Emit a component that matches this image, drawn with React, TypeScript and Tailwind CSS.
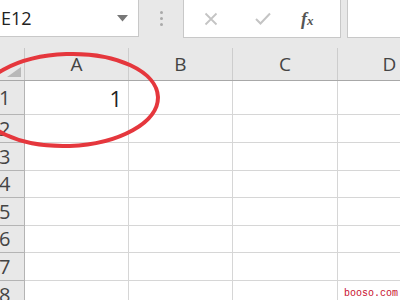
const COLS = ['A', 'B', 'C', 'D'];
const ROWS = [
  { n: '1', h: 'h-[34px]', value: '1' },
  { n: '2', h: 'h-[28px]' },
  { n: '3', h: 'h-[28px]' },
  { n: '4', h: 'h-[27px]' },
  { n: '5', h: 'h-[28px]' },
  { n: '6', h: 'h-[27px]' },
  { n: '7', h: 'h-[28px]' },
  { n: '8', h: 'h-[28px]' },
];

const GRID = 'grid grid-cols-[25px_104px_104px_105px_104px]';

export default function App() {
  return (
    <div className="relative w-[400px] h-[300px] overflow-hidden bg-white font-['Open_Sans','Liberation_Sans',sans-serif] text-[#333]">
      {/* formula toolbar */}
      <div className="flex h-[48px] bg-[#e8e8e8]">
        <div className="flex items-center justify-between w-[139px] h-[37px] bg-white border border-l-0 border-t-0 border-[#c8c8c8] pl-[1px] pr-[10px]">
          <span className="text-[18px] leading-none text-[#222]">E12</span>
          <svg width="11" height="7" viewBox="0 0 11 7">
            <path d="M0 0 L11 0 L5.5 6.5 Z" fill="#777" />
          </svg>
        </div>
        <div className="flex flex-col items-center justify-center gap-[3px] w-[44px] h-[37px]">
          <span className="w-[3px] h-[3px] rounded-full bg-[#aaa]" />
          <span className="w-[3px] h-[3px] rounded-full bg-[#aaa]" />
          <span className="w-[3px] h-[3px] rounded-full bg-[#aaa]" />
        </div>
        <div className="flex items-center w-[158px] h-[38px] bg-white border border-t-0 border-[#c8c8c8]">
          <svg className="ml-[20px]" width="14" height="14" viewBox="0 0 14 14">
            <path d="M1.5 1.5 L12.5 12.5 M12.5 1.5 L1.5 12.5" stroke="#c4c4c4" strokeWidth="1.8" />
          </svg>
          <svg className="ml-[37px]" width="16" height="13" viewBox="0 0 16 13">
            <path d="M1 7 L5.5 11.5 L15 1.5" stroke="#c4c4c4" strokeWidth="2" fill="none" />
          </svg>
          <span className="ml-[30px] font-['Liberation_Serif',serif] italic font-bold text-[18px] leading-none text-[#555]">
            f<span className="text-[13px]">x</span>
          </span>
        </div>
        <div className="ml-[6px] flex-1 h-[38px] bg-white border border-t-0 border-r-0 border-[#c8c8c8]" />
      </div>

      {/* column headers */}
      <div className={`${GRID} h-[33px] bg-[#e8e8e8] border-b border-[#a8a8a8]`}>
        <div className="relative border-r border-[#c8c8c8]">
          <svg className="absolute right-[3px] bottom-[3px]" width="14" height="10" viewBox="0 0 14 10">
            <path d="M14 0 L14 10 L0 10 Z" fill="#b8b8b8" />
          </svg>
        </div>
        {COLS.map((c) => (
          <div key={c} className="flex items-center justify-center border-r border-[#cdcdcd] text-[19px] text-[#444]">
            {c}
          </div>
        ))}
      </div>

      {/* rows */}
      {ROWS.map((r) => (
        <div key={r.n} className={`${GRID} ${r.h}`}>
          <div className="flex items-center bg-[#e8e8e8] border-r border-b border-[#b4b4b4] text-[20px] leading-none text-[#444] -ml-[1px]">
            {r.n}
          </div>
          <div className="flex items-center justify-end pr-[6px] border-r border-b border-[#d6d6d6] text-[22px] leading-none text-[#222]">
            {r.value}
          </div>
          <div className="border-r border-b border-[#d6d6d6]" />
          <div className="border-r border-b border-[#d6d6d6]" />
          <div className="border-r border-b border-[#d6d6d6]" />
        </div>
      ))}

      {/* red marking */}
      <svg className="absolute left-0 top-0 pointer-events-none" width="400" height="300" viewBox="0 0 400 300">
        <ellipse cx="68" cy="100" rx="90" ry="46" transform="rotate(-2 68 100)" fill="none" stroke="#e5373d" strokeWidth="4" />
      </svg>

      <span className="absolute right-[2px] bottom-[1px] font-['Liberation_Mono',monospace] text-[10px] leading-none text-[#c8102e]">
        booso.com
      </span>
    </div>
  );
}
